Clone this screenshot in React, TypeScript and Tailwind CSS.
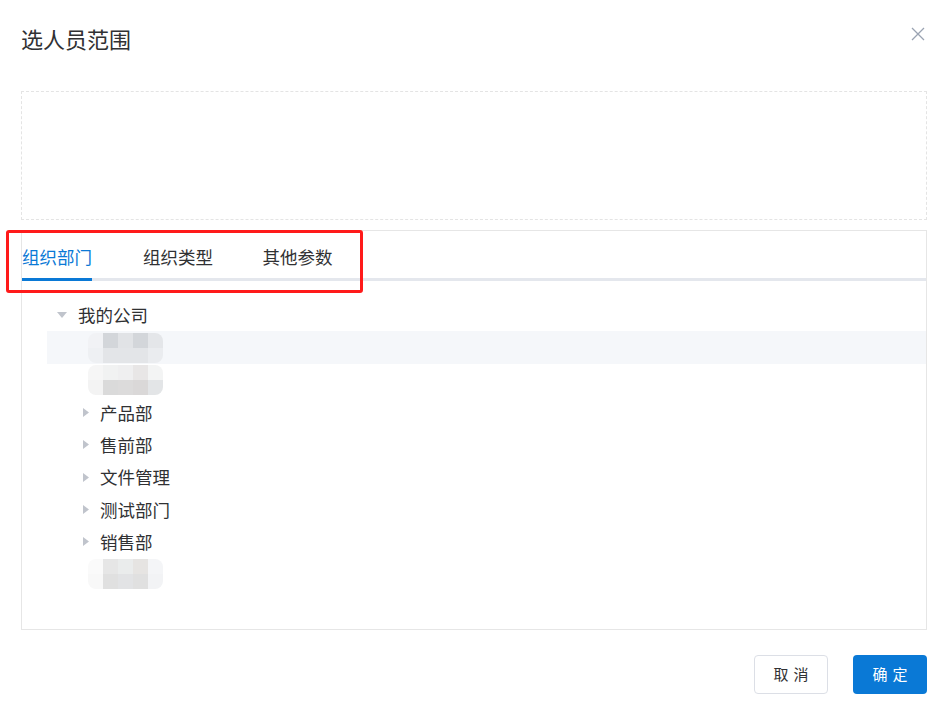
import React from "react";

const font = { fontFamily: '"Noto Sans CJK SC", "Noto Sans", sans-serif' };

type Cells = string[][];

function Blur({ cells }: { cells: Cells }) {
  return (
    <div className="flex flex-col overflow-hidden rounded-[8px] blur-[0.6px]">
      {cells.map((row, i) => (
        <div key={i} className="flex">
          {row.map((c, j) => (
            <div key={j} className="h-[15px] w-[15px]" style={{ backgroundColor: c }} />
          ))}
        </div>
      ))}
    </div>
  );
}

const blurA: Cells = [
  ["#f1f2f5", "#d3d6da", "#e1e3e6", "#d3d6da", "#e4e6e9"],
  ["#eef0f3", "#e3e5e8", "#e3e5e8", "#e3e5e8", "#eaecef"],
];
const blurB: Cells = [
  ["#f6f6f6", "#f1f2f2", "#efeff0", "#e8e6e6", "#f3f4f4"],
  ["#f3f3f3", "#dadada", "#dcdbdb", "#dad8d8", "#e3e5e7"],
];
const blurC: Cells = [
  ["#fafafa", "#e6e6e6", "#eaecec", "#e6e4e2", "#f4f5f7"],
  ["#f8f8f8", "#e0e0e0", "#e2e3e5", "#e0e0e0", "#f2f3f5"],
];

function CaretDown() {
  return (
    <svg width="10" height="6" viewBox="0 0 10 6" className="shrink-0">
      <path d="M0 0 L10 0 L5 6 Z" fill="#c0c4cc" />
    </svg>
  );
}

function CaretRight() {
  return (
    <svg width="6" height="9" viewBox="0 0 6 9" className="shrink-0">
      <path d="M0 0 L6 4.5 L0 9 Z" fill="#c0c4cc" />
    </svg>
  );
}

function ChildRow({ label }: { label: string }) {
  return (
    <div className="flex h-[32.4px] items-center pl-[36px]">
      <CaretRight />
      <span className="ml-[11px] text-[17.5px] leading-none text-[#303133]">{label}</span>
    </div>
  );
}

function BlurRow({ cells, active }: { cells: Cells; active?: boolean }) {
  return (
    <div className={`flex h-[32.4px] items-center pl-[41px] ${active ? "bg-[#f5f7fa]" : ""}`}>
      <Blur cells={cells} />
    </div>
  );
}

export default function App() {
  return (
    <div className="relative h-[717px] w-[949px] bg-white" style={font}>
      <div className="flex flex-col pl-[21px] pr-[22px]">
        <div className="flex items-start justify-between pt-[23px]">
          <div className="text-[22px] leading-[30px] text-[#303133]">选人员范围</div>
          <svg width="14" height="14" viewBox="0 0 14 14" className="mr-[2px] mt-[4px]">
            <path d="M1 1 L13 13 M13 1 L1 13" stroke="#9aa3b2" strokeWidth="1.3" />
          </svg>
        </div>

        <div className="mt-[38px] h-[129px] border border-dashed border-[#e4e4e4]" />

        <div className="mt-[10px] flex h-[400px] flex-col border border-[#e6e6e6]">
          <div className="relative flex h-[50px]">
            <div className="absolute bottom-0 left-0 right-0 h-[3px] bg-[#e4e7ed]" />
            <div className="relative flex h-full w-[70px] items-center justify-center pt-[3px] text-[17.5px] text-[#0a79d6]">
              组织部门
              <div className="absolute bottom-0 left-0 right-0 h-[3px] bg-[#0a79d6]" />
            </div>
            <div className="ml-[51px] flex h-full w-[70px] items-center justify-center pt-[3px] text-[17.5px] text-[#303133]">
              组织类型
            </div>
            <div className="ml-[49px] flex h-full w-[71px] items-center justify-center pt-[3px] text-[17.5px] text-[#303133]">
              其他参数
            </div>
          </div>

          <div className="mt-[18px] flex flex-col pl-[25px]">
            <div className="flex h-[32.4px] items-center pl-[10px]">
              <CaretDown />
              <span className="ml-[11px] text-[17.5px] leading-none text-[#303133]">我的公司</span>
            </div>
            <BlurRow cells={blurA} active />
            <BlurRow cells={blurB} />
            <ChildRow label="产品部" />
            <ChildRow label="售前部" />
            <ChildRow label="文件管理" />
            <ChildRow label="测试部门" />
            <ChildRow label="销售部" />
            <BlurRow cells={blurC} />
          </div>
        </div>

        <div className="mt-[25px] flex justify-end gap-[25px]">
          <button className="flex h-[39px] w-[74px] items-center justify-center rounded-[4px] border border-[#dcdfe6] bg-white pl-[5px] text-[15px] tracking-[5px] text-[#303133]">
            取消
          </button>
          <button className="flex h-[39px] w-[74px] items-center justify-center rounded-[4px] bg-[#0a79d6] pl-[5px] text-[15px] tracking-[5px] text-white">
            确定
          </button>
        </div>
      </div>

      <div className="absolute left-[6px] top-[230px] h-[63px] w-[357px] rounded-[3px] border-[3px] border-[#ff1a1a]" />
    </div>
  );
}
